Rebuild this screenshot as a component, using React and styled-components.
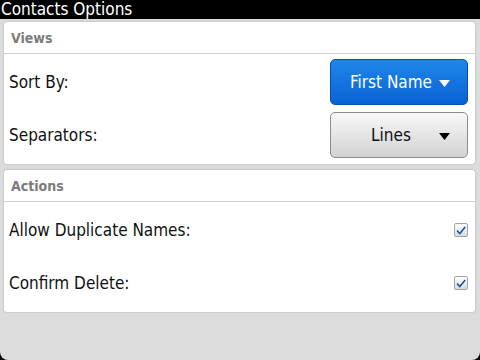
import styled, { createGlobalStyle } from "styled-components";

const Global = createGlobalStyle`
  html, body {
    margin: 0;
    background: #000;
  }
  body {
    font-family: "DejaVu Sans Condensed", "DejaVu Sans", sans-serif;
  }
`;

const Screen = styled.div`
  width: 480px;
  height: 360px;
  background: #dcdcdc;
  border-radius: 0 0 8px 8px;
  overflow: hidden;
  display: flex;
  flex-direction: column;
`;

const TitleBar = styled.div`
  height: 19px;
  background: #000;
  color: #fff;
  font-size: 17px;
  line-height: 19px;
  padding-left: 1px;
  white-space: nowrap;
`;

const Content = styled.div`
  display: flex;
  flex-direction: column;
  gap: 6px;
  padding: 3px 5px 0 4px;
`;

const Panel = styled.section`
  background: #fff;
  border-radius: 3px;
  box-shadow: 0 0 2px rgba(0, 0, 0, 0.25);
  padding-bottom: 4px;
`;

const Header = styled.div`
  height: 31px;
  border-bottom: 1px solid #cfcfcf;
  display: flex;
  align-items: center;
  padding-left: 7px;
  font-size: 14px;
  font-weight: bold;
  color: #7c7c7c;
`;

const Row = styled.div`
  height: 53px;
  box-sizing: border-box;
  display: flex;
  align-items: center;
  justify-content: space-between;
  padding: 3px 7px 0 5px;
  font-size: 17px;
  color: #111;
`;

const Select = styled.button`
  width: 138px;
  height: 46px;
  border-radius: 5px;
  display: flex;
  align-items: center;
  justify-content: center;
  position: relative;
  font-family: inherit;
  font-size: 17px;
  cursor: pointer;
  ${({ primary }) =>
    primary
      ? "background: linear-gradient(#1f86ea, #0a62d4); border: 1px solid #0a4fae; color: #fff; padding-right: 22px;"
      : "background: linear-gradient(#f8f8f8, #d2d2d2); border: 1px solid #8c8c8c; color: #111; padding-right: 22px;"}
`;

const Arrow = styled.svg`
  position: absolute;
  right: 17px;
  top: 20px;
`;

const Box = styled.span`
  width: 12px;
  height: 12px;
  border: 1px solid #a4a4a4;
  border-radius: 2px;
  background: linear-gradient(#ffffff, #d6dbe2);
  display: flex;
  align-items: center;
  justify-content: center;
`;

const SelectButton = ({ text, primary }) => (
  <Select primary={primary}>
    {text}
    <Arrow width="11" height="7" viewBox="0 0 11 7">
      <path d="M0 0H11L5.5 7Z" fill={primary ? "#fff" : "#000"} />
    </Arrow>
  </Select>
);

const Checkbox = () => (
  <Box>
    <svg width="10" height="9" viewBox="0 0 10 9">
      <path d="M1 4.5L3.8 7.5L9.2 1" fill="none" stroke="#24509a" strokeWidth="1.6" />
    </svg>
  </Box>
);

export default function App() {
  return (
    <>
      <Global />
      <Screen>
        <TitleBar>Contacts Options</TitleBar>
        <Content>
          <Panel>
            <Header>Views</Header>
            <Row>
              Sort By:
              <SelectButton text="First Name" primary />
            </Row>
            <Row>
              Separators:
              <SelectButton text="Lines" />
            </Row>
          </Panel>
          <Panel>
            <Header>Actions</Header>
            <Row>
              Allow Duplicate Names:
              <Checkbox />
            </Row>
            <Row>
              Confirm Delete:
              <Checkbox />
            </Row>
          </Panel>
        </Content>
      </Screen>
    </>
  );
}
